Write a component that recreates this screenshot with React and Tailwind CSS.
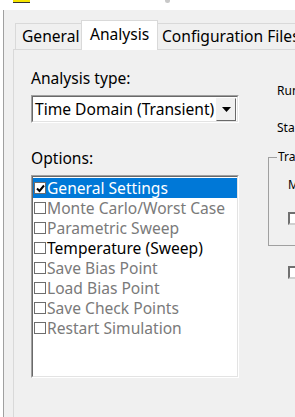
import React from 'react';

const font = { fontFamily: '"Noto Sans", "Open Sans", sans-serif' };

const options = [
  { label: 'General Settings', checked: true, selected: true },
  { label: 'Monte Carlo/Worst Case', disabled: true },
  { label: 'Parametric Sweep', disabled: true },
  { label: 'Temperature (Sweep)' },
  { label: 'Save Bias Point', disabled: true },
  { label: 'Load Bias Point', disabled: true },
  { label: 'Save Check Points', disabled: true },
  { label: 'Restart Simulation', disabled: true },
];

const CheckBox = ({ checked }) => (
  <span className="w-[12px] h-[12px] shrink-0 border border-[#6d6d6d] bg-white flex items-center justify-center">
    {checked && (
      <svg width="9" height="9" viewBox="0 0 9 9">
        <path d="M1 4.5 L3.5 7 L8 1.5" stroke="#000" strokeWidth="2" fill="none" />
      </svg>
    )}
  </span>
);

const OptionRow = ({ label, checked, selected, disabled }) => {
  let color = 'text-black';
  if (selected) color = 'text-white bg-[#0078d7]';
  else if (disabled) color = 'text-[#7a7a7a]';
  return (
    <div className={`h-[20px] flex items-center gap-[1px] pl-[1px] whitespace-nowrap ${color}`}>
      <CheckBox checked={checked} />
      <span className="leading-[20px]">{label}</span>
    </div>
  );
};

const SunkenBox = ({ children, className = '' }) => (
  <div className={`border border-t-[#a0a0a0] border-l-[#a0a0a0] border-r-white border-b-white ${className}`}>
    <div className="h-full border border-t-[#696969] border-l-[#696969] border-r-[#e3e3e3] border-b-[#e3e3e3] bg-white">
      {children}
    </div>
  </div>
);

const App = () => {
  return (
    <div className="w-[295px] h-[417px] overflow-hidden bg-[#f0f0f0] flex flex-col text-[15.6px] text-black" style={font}>
      {/* title strip */}
      <div className="h-[10px] bg-white flex shrink-0">
        <div className="w-[17px] h-[3px] ml-[13px] bg-[#f5e400] border-b border-[#333]" />
        <div className="w-[5px] h-[3px] ml-[135px] rounded-b-full bg-[#c8c8c8]" />
      </div>

      <div className="flex flex-1 min-h-0">
        <div className="w-[4px] bg-white border-r border-[#a0a0a0] shrink-0" />
        <div className="w-[9px] shrink-0" />

        <div className="flex-1 flex flex-col pt-[10px] min-w-0">
          {/* tabs */}
          <div className="h-[29px] flex items-end pl-[2px] whitespace-nowrap">
            <div className="shrink-0 h-[26px] w-[66px] border-t border-l border-[#d9d9d9] bg-[#f0f0f0] pl-[6px] flex items-center leading-none">
              General
            </div>
            <div className="shrink-0 relative z-10 -mb-px h-[30px] w-[77px] border-t border-l border-r border-[#d9d9d9] bg-white pl-[8px] flex items-center leading-none pb-[2px]">
              Analysis
            </div>
            <div className="shrink-0 h-[26px] w-[160px] border-t border-r border-[#d9d9d9] bg-[#f0f0f0] pl-[4px] flex items-center leading-none">
              Configuration Files
            </div>
          </div>

          {/* panel */}
          <div className="flex-1 border-t border-l border-[#d9d9d9] flex pl-[17px] pt-[18px] w-[400px]">
            <div className="w-[208px] shrink-0 flex flex-col">
              <div className="leading-[20px]">Analysis type:</div>
              <SunkenBox className="mt-[7px] h-[28px]">
                <div className="h-full flex items-center justify-between pl-[2px] pr-[1px]">
                  <span className="leading-[20px] whitespace-nowrap">Time Domain (Transient)</span>
                  <div className="shrink-0 w-[20px] h-[23px] bg-[#f0f0f0] border border-t-[#f0f0f0] border-l-[#f0f0f0] border-r-[#696969] border-b-[#696969] flex items-center justify-center">
                    <svg width="9" height="5" viewBox="0 0 9 5">
                      <path d="M0 0 H9 L4.5 5 Z" fill="#000" />
                    </svg>
                  </div>
                </div>
              </SunkenBox>

              <div className="mt-[25px] leading-[20px]">Options:</div>
              <SunkenBox className="mt-[7px] h-[203px]">
                <div className="pt-px">
                  {options.map((o) => (
                    <OptionRow key={o.label} {...o} />
                  ))}
                </div>
              </SunkenBox>
            </div>

            <div className="ml-[29px] flex flex-col text-[12px] whitespace-nowrap w-[200px]">
              <div className="mt-[15px] pl-[9px] leading-[16px]">Run to time:</div>
              <div className="mt-[21px] pl-[9px] leading-[16px]">Start saving data after:</div>
              <fieldset className="mt-[13px] border border-[#a0a0a0] pb-[18px] w-[190px]">
                <legend className="ml-[8px] px-[1px] leading-[16px]">Transient options</legend>
                <div className="pl-[19px] mt-[12px] leading-[16px]">Maximum step size:</div>
                <div className="pl-[19px] mt-[16px] flex items-center gap-[4px]">
                  <span className="w-[13px] h-[13px] border-2 border-t-[#707070] border-l-[#707070] border-r-[#d0d0d0] border-b-[#d0d0d0] bg-white" />
                  <span>Skip the initial transient bias point calculation</span>
                </div>
              </fieldset>
              <div className="pl-[20px] mt-[17px] flex items-center gap-[4px]">
                <span className="w-[13px] h-[13px] border-2 border-t-[#707070] border-l-[#707070] border-r-[#d0d0d0] border-b-[#d0d0d0] bg-white" />
                <span>Run in resume mode</span>
              </div>
            </div>
          </div>
        </div>
      </div>
    </div>
  );
};

export default App;
